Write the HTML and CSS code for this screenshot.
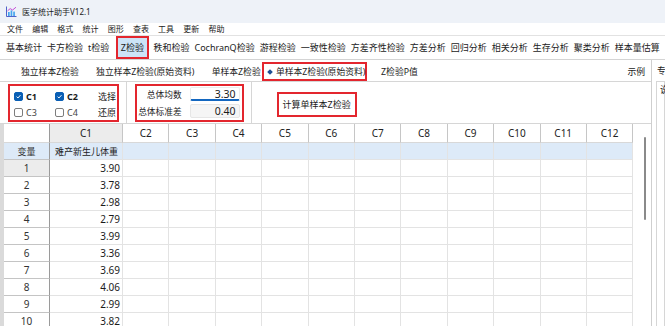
FILE: index.html
```html
<!DOCTYPE html>
<html>
  <head>
    <meta charset="UTF-8">
    <link rel="stylesheet" href="styles.css">
  </head>
  <body>
    <div class="titlebar">
      <svg class="appicon" viewBox="0 0 11 11">
        <path d="M0.5 0.5V10.5H10.5" stroke="#4f63c9" fill="none"/>
        <rect x="2" y="6" width="1.7" height="4" fill="#45a6ee"/>
        <rect x="4.6" y="4.4" width="1.7" height="5.6" fill="#45a6ee"/>
        <rect x="7.2" y="5.6" width="1.7" height="4.4" fill="#45a6ee"/>
        <path d="M1.6 4.8L4.2 2.6 6.6 4 10 1.2" stroke="#c44dd8" fill="none"/>
      </svg>
      <span>医学统计助手V12.1</span>
    </div>

    <div class="menubar">
      <span>文件</span><span>编辑</span><span>格式</span><span>统计</span><span>图形</span><span>查表</span><span>工具</span><span>更新</span><span>帮助</span>
    </div>

    <div class="toolbar">
      <span class="tool">基本统计</span>
      <span class="tool">卡方检验</span>
      <span class="tool">t检验</span>
      <span class="tool on">Z检验</span>
      <span class="tool">秩和检验</span>
      <span class="tool">CochranQ检验</span>
      <span class="tool">游程检验</span>
      <span class="tool">一致性检验</span>
      <span class="tool">方差齐性检验</span>
      <span class="tool">方差分析</span>
      <span class="tool">回归分析</span>
      <span class="tool">相关分析</span>
      <span class="tool">生存分析</span>
      <span class="tool">聚类分析</span>
      <span class="tool">样本量估算</span>
    </div>

    <div class="main">
      <div class="left">
        <div class="tabs">
          <span class="tab">独立样本Z检验</span>
          <span class="tab">独立样本Z检验(原始资料)</span>
          <span class="tab">单样本Z检验</span>
          <span class="tab on"><i class="dot"></i>单样本Z检验(原始资料)</span>
          <span class="tab">Z检验P值</span>
          <span class="tab example">示例</span>
        </div>

        <div class="options">
          <div class="cols">
            <span class="chk"><span class="box on"><svg viewBox="0 0 10 10"><path d="M2.3 5.2l1.9 1.9 3.6-4" stroke="#fff" stroke-width="1.4" fill="none"/></svg></span><b>C1</b></span>
            <span class="chk"><span class="box on"><svg viewBox="0 0 10 10"><path d="M2.3 5.2l1.9 1.9 3.6-4" stroke="#fff" stroke-width="1.4" fill="none"/></svg></span><b>C2</b></span>
            <span class="link">选择</span>
            <span class="chk"><span class="box"></span>C3</span>
            <span class="chk"><span class="box"></span>C4</span>
            <span class="link">还原</span>
          </div>
          <div class="sep"></div>
          <div class="params">
            <span class="lbl">总体均数</span>
            <span class="val focus">3.30</span>
            <span class="lbl">总体标准差</span>
            <span class="val">0.40</span>
          </div>
          <div class="sep sep2"></div>
          <button class="calc">计算单样本Z检验</button>
        </div>

        <div class="sheetwrap">
          <div class="sheet">
            <div class="corner"></div><div class="hd sel">C1</div><div class="hd">C2</div><div class="hd">C3</div><div class="hd">C4</div><div class="hd">C5</div><div class="hd">C6</div><div class="hd">C7</div><div class="hd">C8</div><div class="hd">C9</div><div class="hd">C10</div><div class="hd">C11</div><div class="hd">C12</div>
            <div class="rh var">变量</div><div class="var name">难产新生儿体重</div><div class="var"></div><div class="var"></div><div class="var"></div><div class="var"></div><div class="var"></div><div class="var"></div><div class="var"></div><div class="var"></div><div class="var"></div><div class="var"></div><div class="var"></div>
            <div class="rh sel">1</div><div class="num">3.90</div><div></div><div></div><div></div><div></div><div></div><div></div><div></div><div></div><div></div><div></div><div></div>
            <div class="rh">2</div><div class="num">3.78</div><div></div><div></div><div></div><div></div><div></div><div></div><div></div><div></div><div></div><div></div><div></div>
            <div class="rh">3</div><div class="num">2.98</div><div></div><div></div><div></div><div></div><div></div><div></div><div></div><div></div><div></div><div></div><div></div>
            <div class="rh">4</div><div class="num">2.79</div><div></div><div></div><div></div><div></div><div></div><div></div><div></div><div></div><div></div><div></div><div></div>
            <div class="rh">5</div><div class="num">3.99</div><div></div><div></div><div></div><div></div><div></div><div></div><div></div><div></div><div></div><div></div><div></div>
            <div class="rh">6</div><div class="num">3.36</div><div></div><div></div><div></div><div></div><div></div><div></div><div></div><div></div><div></div><div></div><div></div>
            <div class="rh">7</div><div class="num">3.69</div><div></div><div></div><div></div><div></div><div></div><div></div><div></div><div></div><div></div><div></div><div></div>
            <div class="rh">8</div><div class="num">4.06</div><div></div><div></div><div></div><div></div><div></div><div></div><div></div><div></div><div></div><div></div><div></div>
            <div class="rh">9</div><div class="num">2.99</div><div></div><div></div><div></div><div></div><div></div><div></div><div></div><div></div><div></div><div></div><div></div>
            <div class="rh">10</div><div class="num">3.82</div><div></div><div></div><div></div><div></div><div></div><div></div><div></div><div></div><div></div><div></div><div></div>
          </div>
          <div class="vscroll"><div class="thumb"></div></div>
        </div>
      </div>

      <div class="right">
        <div class="rtab">专业解释</div>
        <div class="rbox">说明</div>
      </div>
    </div>
  </body>
</html>
```

FILE: styles.css
```css
html, body {
  margin: 0;
}
body {
  width: 665px;
  height: 326px;
  overflow: hidden;
  background: #fff;
  color: #1b1b1b;
  font-family: "Noto Sans", "Noto Sans CJK SC", sans-serif;
}

/* window chrome */
.titlebar {
  height: 23px;
  display: flex;
  align-items: center;
  padding-left: 6px;
  background: #eef2f8;
  font-size: 8px;
}
.appicon {
  width: 11px;
  height: 11px;
  margin-right: 5px;
}
.menubar {
  height: 12px;
  line-height: 12px;
  display: flex;
  padding-left: 2.4px;
  font-size: 8px;
  border-bottom: 1px solid #e2e2e2;
}
.menubar span {
  padding: 0 4.6px;
}

.toolbar {
  height: 23px;
  display: flex;
  padding-left: 3.5px;
  font-size: 9px;
  white-space: nowrap;
  overflow: hidden;
  border-bottom: 1px solid #d4d4d4;
}
.tool {
  display: flex;
  align-items: center;
  padding: 0 2.5px;
}
.tool.on {
  margin: 0 2px 0 4px;
  padding: 0 3px;
  background: #cce4f7;
  border: 2px solid #e3262e;
}

.main {
  display: flex;
  height: 266px;
  overflow: hidden;
}
.left {
  width: 651px;
  border-right: 1px solid #cfcfcf;
}

/* sub tabs */
.tabs {
  height: 19px;
  padding: 2px 0 0 12.35px;
  display: flex;
  font-size: 8.8px;
  white-space: nowrap;
  border-bottom: 1px solid #d6d6d6;
}
.tab {
  display: flex;
  align-items: center;
  padding: 0 8.65px;
}
.tab.on {
  margin: 0 5px 0 -6.9px;
  padding: 0 0 0 3px;
  border: 2px solid #e3262e;
}
.dot {
  display: inline-block;
  width: 4px;
  height: 4px;
  margin: 0 3.5px 0 1px;
  background: #1d4f94;
  transform: rotate(45deg);
}
.tab.example {
  margin-left: auto;
  padding-right: 6px;
}

/* options strip */
.options {
  height: 41px;
  display: flex;
  align-items: flex-start;
  border-bottom: 1px solid #d6d6d6;
}
.cols {
  margin: 2px 0 0 8px;
  padding: 2px 1px 0 4px;
  display: grid;
  grid-template-columns: 41px 43px auto;
  grid-auto-rows: 16px;
  border: 2px solid #e3262e;
  font-size: 9px;
}
.chk {
  display: flex;
  align-items: center;
  gap: 3px;
  color: #444;
}
.chk b {
  color: #1b1b1b;
}
.box {
  width: 9px;
  height: 9px;
  box-sizing: border-box;
  border: 1px solid #7d7d7d;
  border-radius: 2px;
  background: #fff;
}
.box.on {
  background: #0a5fb5;
  border-color: #0a5fb5;
}
.box svg {
  display: block;
  width: 7px;
  height: 7px;
}
.link {
  display: flex;
  align-items: center;
}
.sep {
  width: 1px;
  align-self: stretch;
  margin: 0 8px 0 6.6px;
  background: #d6d6d6;
}
.params {
  margin-top: 2px;
  padding: 1px 2px 2px 0;
  display: grid;
  grid-template-columns: 49px 50px;
  grid-auto-rows: 14px;
  column-gap: 4px;
  row-gap: 3px;
  border: 2px solid #e3262e;
}
.lbl {
  display: flex;
  align-items: center;
  justify-content: flex-end;
  padding-right: 4px;
  font-size: 8.7px;
}
.val {
  display: flex;
  align-items: center;
  justify-content: flex-end;
  padding-right: 3px;
  font-size: 10.5px;
  background: #f5f5f5;
  border: 1px solid #e6e6e6;
  border-radius: 2px;
}
.val.focus {
  background: #fff;
  border-color: #ececec;
  border-bottom: 2px solid #1367c0;
}
.sep2 {
  margin: 0 25px 0 7px;
}
.calc {
  margin-top: 10px;
  height: 25px;
  padding: 0 4px;
  background: #fff;
  color: #1b1b1b;
  font-family: inherit;
  font-size: 9px;
  border: 2px solid #e3262e;
  border-radius: 0;
}

/* data sheet */
.sheetwrap {
  display: flex;
}
.sheet {
  display: grid;
  grid-template-columns: 46px 73px repeat(11, 46.4px);
  grid-template-rows: 19px;
  grid-auto-rows: 17px;
  border-left: 4px solid #dadada;
}
.sheet > div {
  box-sizing: border-box;
  display: flex;
  align-items: center;
  overflow: hidden;
  white-space: nowrap;
  font-size: 10px;
  border-right: 1px solid #e3e3e3;
  border-bottom: 1px solid #e3e3e3;
}
.sheet .corner {
  border-right-color: #9a9a9a;
  border-bottom-color: #d8d8d8;
}
.sheet .hd {
  justify-content: center;
  color: #222;
  border-right-color: #c6c6c6;
  border-bottom-color: #d8d8d8;
}
.sheet .rh {
  justify-content: center;
  color: #333;
  border-right-color: #9a9a9a;
  border-bottom-color: #c4c4c4;
}
.sheet .var {
  background: #ddeaf8;
  font-size: 9px;
}
.sheet .name {
  padding-left: 5px;
}
.sheet .sel {
  background: #ececec;
}
.sheet .num {
  justify-content: flex-end;
  padding-right: 2px;
}
.vscroll {
  width: 17px;
}
.thumb {
  width: 2px;
  height: 83px;
  margin: 13px 0 0 11px;
  border-radius: 1px;
  background: #8a8a8a;
}

/* side panel, mostly cut off */
.right {
  flex: 1;
  padding-left: 4px;
  font-size: 8.8px;
  white-space: nowrap;
  overflow: hidden;
}
.rtab {
  height: 21px;
  display: flex;
  align-items: center;
  padding-left: 1px;
}
.rbox {
  height: 100%;
  padding: 1px 3px;
  border: 1px solid #d6d6d6;
}
```
